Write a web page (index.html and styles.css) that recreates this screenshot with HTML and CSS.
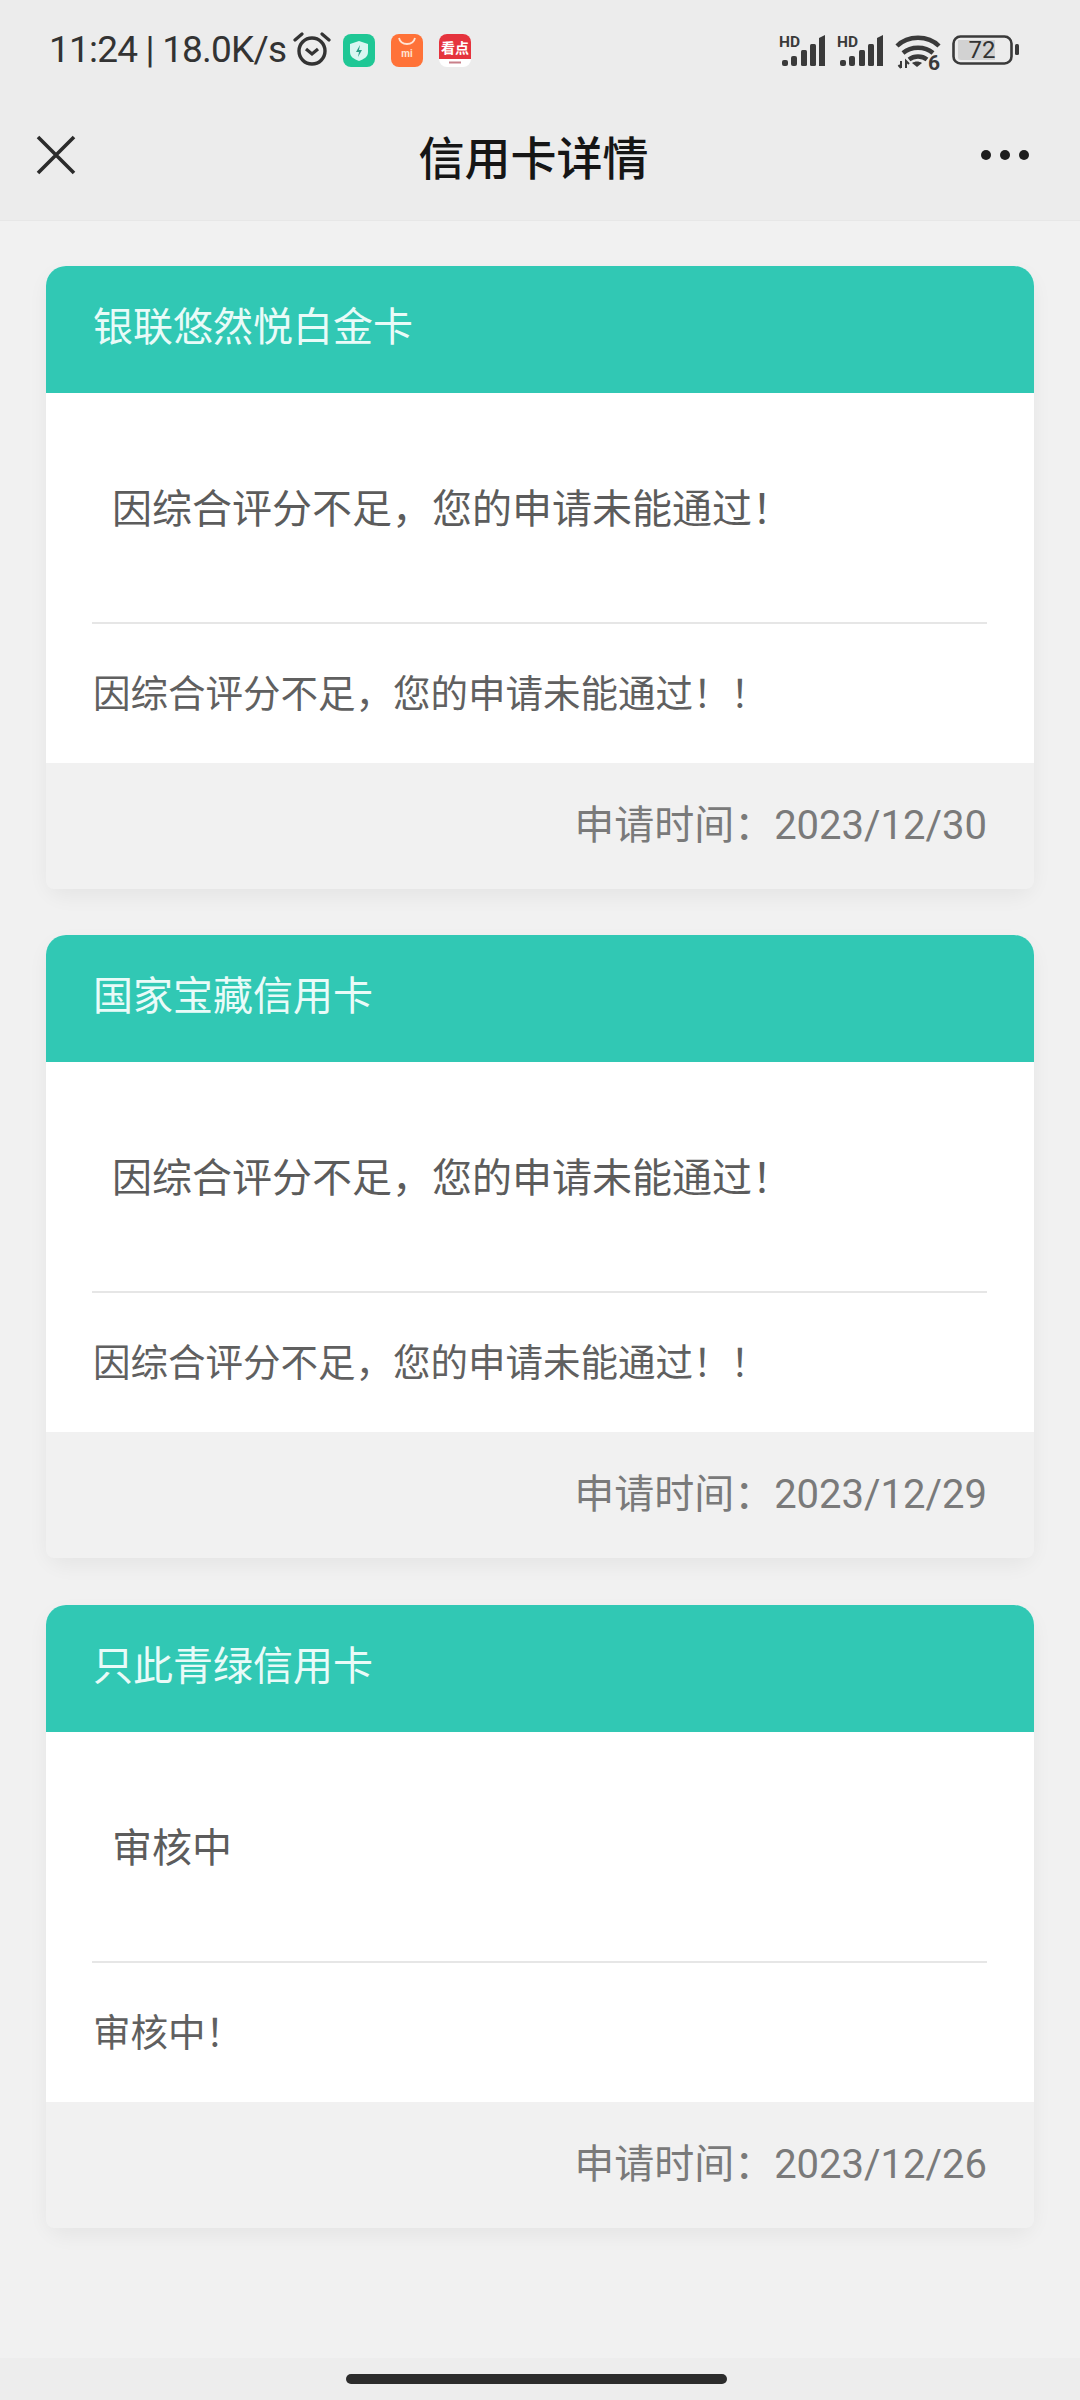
FILE: index.html
```html
<!DOCTYPE html>
<html lang="zh-CN">
<head>
<meta charset="utf-8">
<title>信用卡详情</title>
<link rel="stylesheet" href="styles.css">
</head>
<body>
<header class="top">
  <div class="status">
    <div class="status-left">
      <span class="clock">11:24 | 18.0K/s</span>
      <svg class="alarm" viewBox="0 0 38 36" width="38" height="36"><circle cx="19" cy="20" r="13" fill="none" stroke="#333" stroke-width="3.4"/><path d="M13 18l6 5 6-5" fill="none" stroke="#333" stroke-width="3.2"/><path d="M2 9l7-6M36 9l-7-6" stroke="#333" stroke-width="3.2" stroke-linecap="round"/></svg>
      <svg class="app" viewBox="0 0 32 33" width="32" height="33"><rect width="32" height="33" rx="8" fill="#1fc795"/><path d="M16 7l9 3v8c0 5-4 7-9 9-5-2-9-4-9-9v-8z" fill="#d9f6f1"/><path d="M17 11l-4 7h3l-1 5 4-7h-3z" fill="#2a9d86"/></svg>
      <svg class="app" viewBox="0 0 32 33" width="32" height="33"><rect width="32" height="33" rx="8" fill="#ff7238"/><path d="M8 4c2 8 14 8 16 0" fill="none" stroke="#ffe3d3" stroke-width="1.8"/><text x="16" y="23" class="app-mi">mi</text></svg>
      <svg class="app" viewBox="0 0 32 33" width="32" height="33"><rect width="32" height="33" rx="8" fill="#ffffff"/><path d="M0 8a8 8 0 0 1 8-8h16a8 8 0 0 1 8 8v17H0z" fill="#e5333d"/><text x="16" y="19" class="app-red">看点</text><rect x="10" y="27.5" width="12" height="2" fill="#c9808a"/></svg>
    </div>
    <div class="status-right">
      <svg class="signal" viewBox="0 -5 48 36" width="48" height="36"><text x="0" y="12" class="hd">HD</text><rect x="3" y="25" width="6" height="6" rx="2" fill="#3a3a3a"/><rect x="12" y="21" width="6" height="10" rx="2" fill="#3a3a3a"/><rect x="22" y="15" width="6" height="16" rx="1.5" fill="#3a3a3a"/><rect x="31" y="9" width="6" height="22" rx="1.5" fill="#3a3a3a"/><path d="M40 3l6-3v31h-6z" fill="#3a3a3a"/></svg>
      <svg class="signal" viewBox="0 -5 48 36" width="48" height="36"><text x="0" y="12" class="hd">HD</text><rect x="3" y="25" width="6" height="6" rx="2" fill="#3a3a3a"/><rect x="12" y="21" width="6" height="10" rx="2" fill="#3a3a3a"/><rect x="22" y="15" width="6" height="16" rx="1.5" fill="#3a3a3a"/><rect x="31" y="9" width="6" height="22" rx="1.5" fill="#3a3a3a"/><path d="M40 3l6-3v31h-6z" fill="#3a3a3a"/></svg>
      <svg class="wifi" viewBox="0 0 46 44" width="46" height="44"><path d="M2 12c11-11 31-11 42 0M8 19c8-7 22-7 30 0M14 25.5c5-4 13-4 18 0" fill="none" stroke="#3a3a3a" stroke-width="4.4"/><path d="M22 33l-5-4c3-2 7-2 10 0z" fill="#3a3a3a"/><path d="M6 27v7M3.5 31l2.500 3M11 34v-7l3 3" fill="none" stroke="#3a3a3a" stroke-width="2"/><text x="33" y="36" class="six">6</text></svg>
      <svg class="battery" viewBox="0 0 67 30" width="67" height="30"><rect x="1.5" y="1.5" width="58" height="27" rx="7" fill="none" stroke="#3a3a3a" stroke-width="2.6"/><path d="M6 5h37v20H9a3 3 0 0 1-3-3z" fill="#d2d2d2"/><rect x="63" y="9" width="4" height="11" rx="1.5" fill="#3a3a3a"/><text x="30" y="23" class="batt">72</text></svg>
    </div>
  </div>
  <nav class="nav">
    <svg class="close" viewBox="0 0 40 40" width="40" height="40"><path d="M2 2l36 36M38 2L2 38" stroke="#2b2b2b" stroke-width="3.6" fill="none"/></svg>
    <h1 class="title">信用卡详情</h1>
    <div class="more"><i></i><i></i><i></i></div>
  </nav>
</header>

<main class="list">
  <section class="card">
    <h2 class="card-head">银联悠然悦白金卡</h2>
    <p class="result">因综合评分不足，您的申请未能通过！</p>
    <p class="detail">因综合评分不足，您的申请未能通过！！</p>
    <footer class="card-foot">申请时间：2023/12/30</footer>
  </section>
  <section class="card">
    <h2 class="card-head">国家宝藏信用卡</h2>
    <p class="result">因综合评分不足，您的申请未能通过！</p>
    <p class="detail">因综合评分不足，您的申请未能通过！！</p>
    <footer class="card-foot">申请时间：2023/12/29</footer>
  </section>
  <section class="card">
    <h2 class="card-head">只此青绿信用卡</h2>
    <p class="result">审核中</p>
    <p class="detail">审核中！</p>
    <footer class="card-foot">申请时间：2023/12/26</footer>
  </section>
</main>

<div class="home-area"><span class="home-bar"></span></div>
</body>
</html>
```

FILE: styles.css
```css
* { box-sizing: border-box; }
html, body { margin: 0; padding: 0; }
body {
  width: 1080px;
  height: 2400px;
  background: #f1f1f1;
  font-family: "Roboto", "Noto Sans CJK SC", sans-serif;
  display: flex;
  flex-direction: column;
  overflow: hidden;
}
.top { background: #ececec; height: 221px; border-bottom: 1px solid #e7e7e7; flex: none; }
.status {
  height: 90px;
  padding: 10px 61px 0 49px;
  display: flex;
  justify-content: space-between;
  align-items: center;
}
.status-left { display: flex; align-items: center; }
.clock { font-size: 37px; letter-spacing: -0.8px; color: #333; line-height: 44px; white-space: nowrap; }
.alarm { margin: -2px 12px 0 7px; }
.app { margin-right: 16px; }
.app:last-child { margin-right: 0; }
.app-mi { font: 700 10px "Roboto", sans-serif; fill: #ffe3d3; text-anchor: middle; }
.app-red { font: 700 14px "Noto Sans CJK SC", sans-serif; fill: #fff; text-anchor: middle; }
.status-right { display: flex; align-items: center; }
.signal { margin: -5px 10px 0 0; }
.hd { font: 700 15.5px "Roboto", sans-serif; fill: #3a3a3a; }
.wifi { margin: 11px 11px 0 0; }
.six { font: 700 21px "Roboto", sans-serif; fill: #3a3a3a; }
.batt { font: 400 24px "Roboto", sans-serif; fill: #333; text-anchor: middle; }
.nav {
  height: 130px;
  padding: 0 51px 0 38px;
  display: grid;
  grid-template-columns: 1fr auto 1fr;
  align-items: center;
}
.close { margin-left: -2px; }
.title {
  margin: 0;
  font: 500 46px/60px "Noto Sans CJK SC", sans-serif;
  color: #161616;
}
.more { justify-self: end; display: flex; gap: 9px; }
.more i { width: 10px; height: 10px; border-radius: 50%; background: #1d1d1d; display: block; }
.list {
  flex: 1;
  padding: 45px 46px 0;
  display: flex;
  flex-direction: column;
  gap: 46px;
}
.card {
  height: 623px;
  background: #fff;
  border-radius: 20px;
  box-shadow: 0 8px 20px rgba(0, 0, 0, .05);
  display: flex;
  flex-direction: column;
}
.card:last-child { margin-top: 1px; }
.card-head {
  margin: 0;
  height: 127px;
  padding: 31px 47px 0;
  background: #31c8b4;
  border-radius: 20px 20px 0 0;
  font: 400 40px/54px "Noto Sans CJK SC", sans-serif;
  color: #e9fbf8;
}
.result {
  margin: 0 47px 0 46px;
  height: 231px;
  padding: 86px 0 0 20px;
  border-bottom: 2px solid #e6e6e6;
  font: 400 40px/54px "Noto Sans CJK SC", sans-serif;
  color: #5c5c5c;
}
.detail {
  margin: 0;
  height: 139px;
  padding: 41px 47px 0;
  font: 400 37.5px/52px "Noto Sans CJK SC", sans-serif;
  color: #606060;
}
.card-foot {
  height: 126px;
  padding: 36px 47px 0;
  background: #f1f1f1;
  border-radius: 0 0 8px 8px;
  text-align: right;
  font-size: 40px;
  line-height: 54px;
  color: #7a7a7a;
}
.home-area {
  height: 42px;
  flex: none;
  background: #ededed;
  padding: 16px 0 0 346px;
}
.home-bar { display: block; width: 381px; height: 10px; border-radius: 5px; background: #2c2c2c; }
```
